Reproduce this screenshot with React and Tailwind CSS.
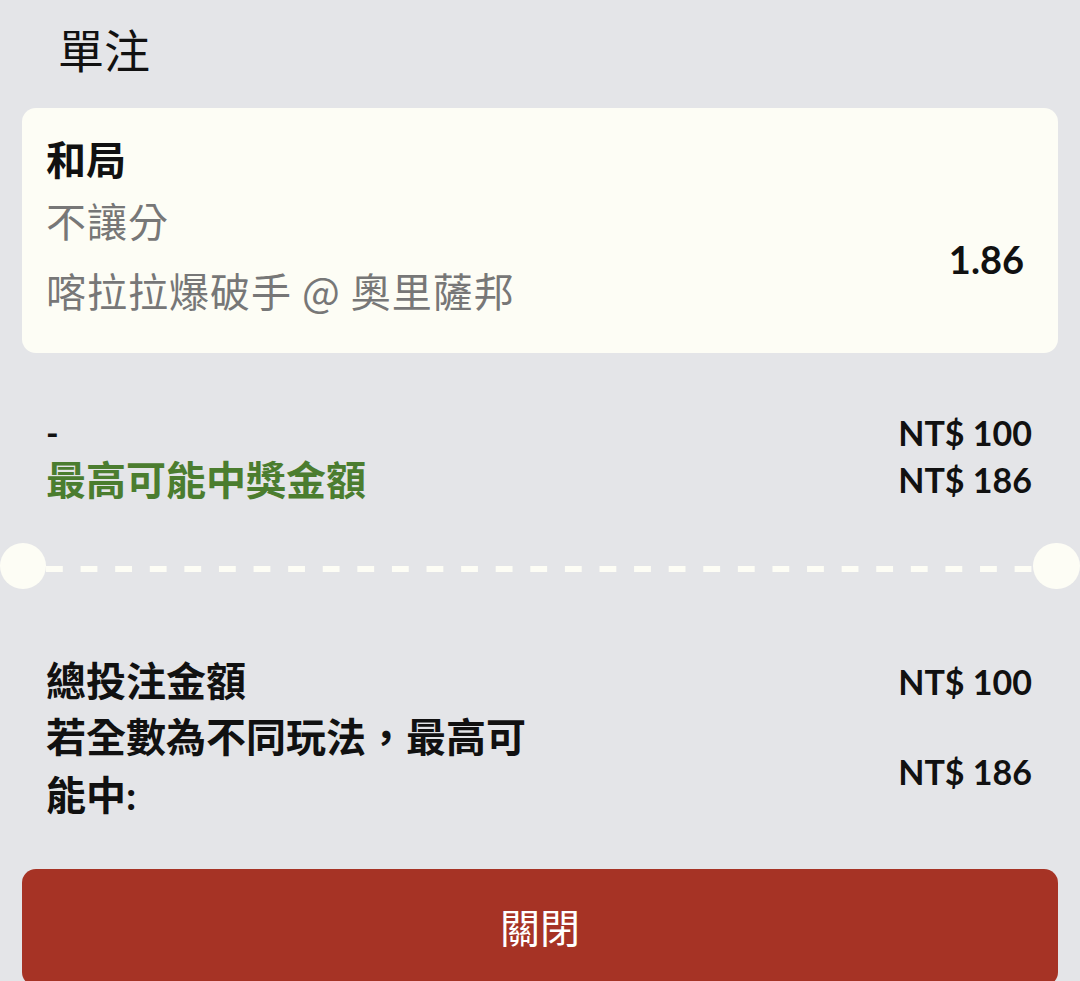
const font = "font-['Lato','Noto_Sans_CJK_TC',sans-serif]";

export default function App() {
  return (
    <div className={`${font} h-[981px] overflow-hidden bg-[#e4e5e8] text-[#111]`}>
      {/* Title */}
      <div className="pl-[58px] pt-[28px] text-[46px] leading-[46px] font-normal">單注</div>

      {/* Selection card */}
      <div className="mx-[22px] mt-[34px] rounded-[14px] bg-[#fdfdf5] pl-[24px] pr-[34px] pt-[33px] pb-[44px]">
        <div className="text-[40px] leading-[38px] font-bold">和局</div>
        <div className="flex items-center">
          <div className="flex-1 text-[#777] text-[40px] leading-[38px] tracking-[1px]">
            <div className="mt-[24px]">不讓分</div>
            <div className="mt-[30px] font-['Noto_Sans_CJK_TC',sans-serif]">喀拉拉爆破手 @ 奧里薩邦</div>
          </div>
          <div className="pt-[30px] text-[38px] leading-[38px] font-bold">1.86</div>
        </div>
      </div>

      {/* Stake rows */}
      <div className="mt-[56px] pl-[46px] pr-[48px]">
        <div className="flex justify-between items-center h-[47px]">
          <span className="text-[34px] font-bold">-</span>
          <span className="text-[34px] font-bold">NT$ 100</span>
        </div>
        <div className="flex justify-between items-center h-[47px]">
          <span className="text-[40px] font-bold text-[#4b7d2f]">最高可能中獎金額</span>
          <span className="text-[34px] font-bold">NT$ 186</span>
        </div>
      </div>

      {/* Ticket divider */}
      <div className="mt-[40px] flex items-center h-[46px]">
        <div className="w-[46px] h-[46px] rounded-full bg-[#fdfdf5]"></div>
        <div className="flex-1 h-[6px] mt-[5px] bg-[linear-gradient(to_right,#fdfdf5_50%,transparent_50%)] bg-[length:34.6px_6px] bg-repeat-x"></div>
        <div className="w-[47px] h-[46px] rounded-full bg-[#fdfdf5]"></div>
      </div>

      {/* Totals */}
      <div className="mt-[65px] pl-[46px] pr-[48px]">
        <div className="flex justify-between items-center h-[54px]">
          <span className="text-[40px] font-bold">總投注金額</span>
          <span className="text-[34px] font-bold">NT$ 100</span>
        </div>
        <div className="flex justify-between items-center">
          <div className="w-[500px] text-[40px] leading-[58px] font-bold">若全數為不同玩法，最高可能中:</div>
          <span className="pt-[10px] text-[34px] font-bold">NT$ 186</span>
        </div>
      </div>

      {/* Close button */}
      <div className="mt-[45px] mx-[22px]">
        <button className="w-full h-[117px] rounded-[14px] bg-[#a63325] text-white text-[40px] font-normal">
          關閉
        </button>
      </div>
    </div>
  );
}
